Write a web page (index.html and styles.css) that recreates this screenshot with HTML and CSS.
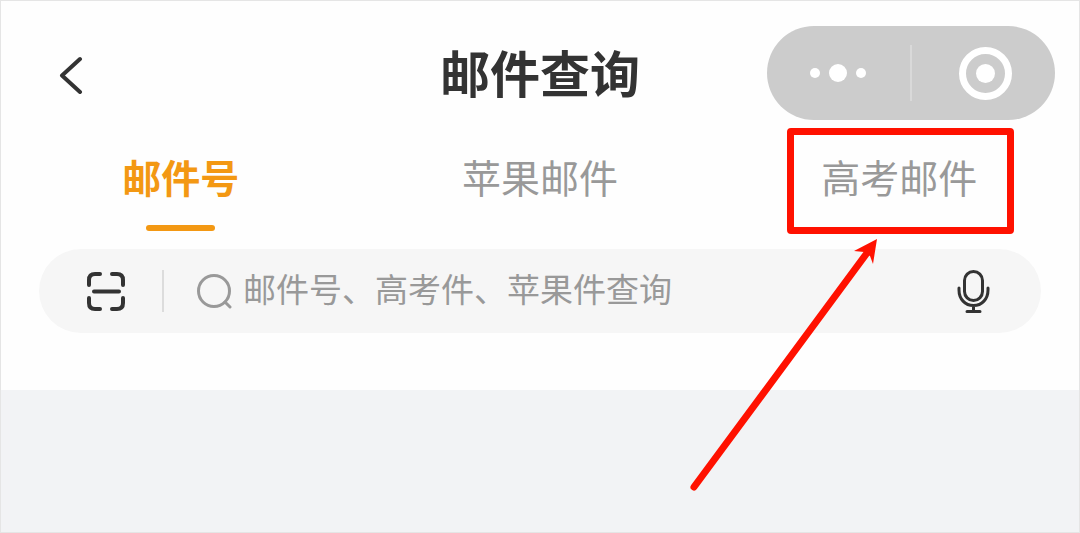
FILE: index.html
```html
<!DOCTYPE html>
<html lang="zh-CN">
<head>
  <meta charset="UTF-8">
  <meta name="viewport" content="width=device-width, initial-scale=1.0">
  <title>邮件查询</title>
  <link rel="stylesheet" href="styles.css">
</head>
<body>

<div class="page">
  <div class="panel">
    <header class="header">
      <button class="back" type="button" aria-label="返回">
        <svg width="26" height="42" viewBox="0 0 26 42"><path d="M23 7 L5 23.500 L23 40" /></svg>
      </button>
      <h1>邮件查询</h1>
      <div class="capsule">
        <button type="button" aria-label="更多">
          <svg width="58" height="20" viewBox="0 0 58 20">
            <circle cx="5" cy="10" r="5" />
            <circle cx="28" cy="10" r="9" />
            <circle cx="51" cy="10" r="5" />
          </svg>
        </button>
        <span class="capsule-line"></span>
        <button type="button" aria-label="关闭">
          <svg width="56" height="54" viewBox="0 0 56 54">
            <circle class="ring" cx="29.500" cy="27.500" r="23" />
            <circle cx="29.500" cy="27.500" r="9.500" />
          </svg>
        </button>
      </div>
    </header>

    <nav class="tabs">
      <button class="tab active" type="button">邮件号</button>
      <button class="tab" type="button">苹果邮件</button>
      <button class="tab" type="button">高考邮件
        <span class="mark">
          <svg class="arrow" width="210" height="260" viewBox="0 0 210 260">
            <path class="shaft" d="M14 252 L187 18" />
            <path class="head" d="M197 4 L174 16 L184 17 L190 21 L193 29 Z" />
          </svg>
        </span>
      </button>
    </nav>

    <form class="search">
      <button class="scan" type="button" aria-label="扫一扫">
        <svg width="38" height="40" viewBox="0 0 38 40">
          <path d="M2 14 V9 Q2 3 8 3 H13 M25 3 H30 Q36 3 36 9 V14 M36 27 V32 Q36 38 30 38 H25 M13 38 H8 Q2 38 2 32 V27 M7 20.500 H32" />
        </svg>
      </button>
      <span class="search-line"></span>
      <label class="search-icon" for="keyword" aria-label="邮件号">
        <svg width="36" height="36" viewBox="0 0 36 36"><circle cx="17" cy="18" r="15.500" /><path d="M28 29 L33 34" /></svg>
      </label>
      <input type="text" id="keyword" placeholder="邮件号、高考件、苹果件查询">
      <button class="voice" type="button" aria-label="语音输入">
        <svg width="34" height="46" viewBox="0 0 34 46">
          <rect x="7.500" y="3.500" width="18" height="29" rx="9" />
          <path d="M2 20 V22 C2 31 8 37.500 16.500 37.500 C25 37.500 31 31 31 22 V20 M16.500 38 V43 M10 43.500 H23" />
        </svg>
      </button>
    </form>
  </div>
</div>

</body>
</html>
```
FILE: styles.css
```css
* { box-sizing: border-box; }
body { margin: 0; font-family: "Noto Sans CJK SC", sans-serif; background-color: #f2f3f5; }
button { border: none; background: none; padding: 0; font-family: inherit; cursor: pointer; }
svg { display: block; fill: none; stroke-linecap: round; stroke-linejoin: round; }

.page { min-height: 100vh; border: 1px solid #e5e5e5; }
.panel { background-color: #fefefe; padding-bottom: 57px; }

.header { display: grid; grid-template-columns: 1fr auto 1fr; align-items: center; padding: 25px 24px 0; }
.header h1 { margin: 0; padding-bottom: 4px; font-size: 50px; line-height: 72px; font-weight: 700; color: #333; }
.back { justify-self: start; margin-left: 32px; }
.back svg { stroke: #333; stroke-width: 4; }

.capsule { justify-self: end; display: flex; align-items: center; width: 288px; height: 94px; border-radius: 47px; background-color: #ccc; }
.capsule button { flex: 1; display: flex; justify-content: center; }
.capsule svg { fill: #fff; }
.capsule .ring { fill: none; stroke: #fff; stroke-width: 7; }
.capsule-line { width: 2px; height: 56px; background-color: #d9d9d9; }

.tabs { display: grid; grid-template-columns: 1fr 1fr 1fr; padding: 30px 0 18px; }
.tab { position: relative; display: flex; flex-direction: column; align-items: center; font-size: 39px; line-height: 53px; color: #999; }
.tab.active { font-weight: 700; color: #f39813; }
.tab.active::after { content: ""; width: 69px; height: 6px; margin-top: 22px; border-radius: 3px; background-color: #f39813; }

/* red callout over the last tab */
.mark { position: absolute; left: 50%; top: -22px; width: 227px; height: 106px; margin-left: -112px; border: 7px solid #ff1100; border-radius: 4px; }
.arrow { position: absolute; right: 117px; top: 100px; pointer-events: none; }
.arrow .shaft { stroke: #ff1100; stroke-width: 7; }
.arrow .head { fill: #ff1100; }

.search { display: flex; align-items: center; height: 84px; margin: 0 38px; padding: 0 50px 0 48px; border-radius: 42px; background-color: #f6f6f6; }
.scan svg { stroke: #333; stroke-width: 4; }
.search-line { width: 2px; height: 42px; margin: 0 33px 0 37px; background-color: #dcdcdc; }
.search-icon svg { stroke: #999; stroke-width: 3; }
.search input { flex: 1; min-width: 0; margin-left: 10px; padding: 0 0 6px; border: none; outline: none; background: none; font-family: inherit; font-size: 33px; line-height: 48px; color: #333; }
.search input::placeholder { color: #999; opacity: 1; }
.voice svg { stroke: #333; stroke-width: 3; }
```
